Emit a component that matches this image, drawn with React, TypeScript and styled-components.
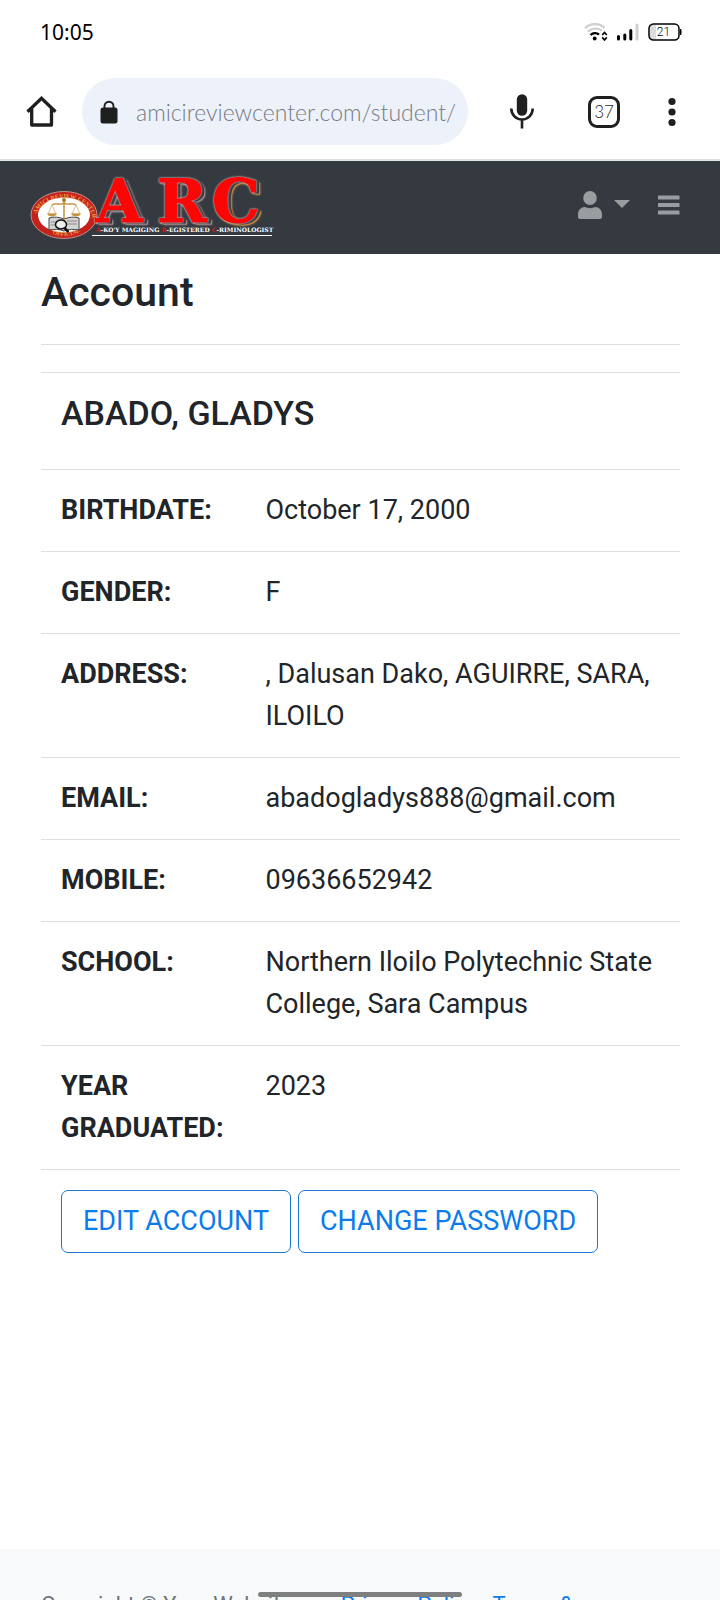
import React from "react";
import styled, { createGlobalStyle } from "styled-components";

const GlobalStyle = createGlobalStyle`
  *, *::before, *::after { box-sizing: border-box; }
  body {
    margin: 0;
    background: #fff;
    color: #212529;
    font-family: Roboto, "Liberation Sans", sans-serif;
    font-size: 27px;
    line-height: 42px;
  }
`;

const Screen = styled.div`
  display: flex;
  flex-direction: column;
  height: 100vh;
  overflow: hidden;
`;

const StatusBar = styled.div`
  display: flex;
  flex: none;
  align-items: center;
  justify-content: space-between;
  height: 64px;
  padding: 0 38px 0 40px;
  color: #000;
`;

const Clock = styled.time`
  font-family: "Noto Sans", sans-serif;
  font-size: 21px;
  line-height: 24px;
`;

const StatusIcons = styled.div`
  display: flex;
  align-items: center;
  gap: 8px;
`;

const BrowserBar = styled.div`
  display: flex;
  flex: none;
  align-items: center;
  height: 96px;
  padding: 0 44px 0 25px;
  border-bottom: 1px solid #dedede;
`;

const IconButton = styled.button`
  display: flex;
  flex: none;
  align-items: center;
  justify-content: center;
  padding: 0;
  border: 0;
  background: none;
  color: #1f1f1f;
  cursor: pointer;
`;

const MicButton = styled(IconButton)`
  width: 36px;
`;

const AddressBar = styled.label`
  display: flex;
  flex: 1;
  align-items: center;
  gap: 18px;
  min-width: 0;
  height: 67px;
  margin: 0 36px 0 24px;
  padding: 0 12px 0 18px;
  border-radius: 34px;
  background: #ecf1fa;
`;

const AddressInput = styled.input`
  flex: 1;
  min-width: 0;
  padding: 0;
  border: 0;
  outline: 0;
  background: none;
  color: #777b82;
  font-family: Lato, sans-serif;
  font-size: 23px;
  font-weight: 300;
`;

const BrowserActions = styled.div`
  display: flex;
  align-items: center;
  gap: 48px;
`;

const TabsButton = styled(IconButton)`
  width: 32px;
  height: 32px;
  border: 3px solid #1f1f1f;
  border-radius: 9px;
  font-family: Lato, sans-serif;
  font-size: 17px;
  font-weight: 300;
  line-height: 20px;
`;

const Scroller = styled.div`
  flex: 1;
  min-height: 0;
  overflow-y: auto;
  scrollbar-width: none;
`;

const Navbar = styled.nav`
  display: flex;
  align-items: center;
  justify-content: space-between;
  height: 94px;
  padding: 0 40px 0 30px;
  border-top: 1px solid #dfeae4;
  background: #343a40;
`;

const BrandLink = styled.a`
  display: flex;
`;

const NavActions = styled.div`
  display: flex;
  align-items: center;
  gap: 28px;
  padding-bottom: 5px;
`;

const NavButton = styled(IconButton)`
  gap: 12px;
  color: #9a9da0;
`;

const Main = styled.main`
  padding: 14px 40px 276px 41px;
`;

const PageTitle = styled.h1`
  margin: 0;
  font-size: 41px;
  font-weight: 500;
  line-height: 49px;
`;

const Rule = styled.hr`
  margin: 27px 0;
  border: 0;
  border-top: 1px solid #dfdfdf;
`;

const DetailsTable = styled.table`
  width: 100%;
  table-layout: fixed;
  border-spacing: 0;
`;

const NameCell = styled.th`
  padding: 20px 20px 35px;
  border-top: 1px solid #dee0e2;
  font-size: 34px;
  font-weight: 500;
  line-height: 41px;
  text-align: left;
`;

const LabelCell = styled.th`
  padding: 19px 20px 20px;
  border-top: 1px solid #dee0e2;
  font-weight: 700;
  text-align: left;
  vertical-align: top;
`;

const ValueCell = styled.td`
  padding: 19px 20px 20px;
  border-top: 1px solid #dee0e2;
  vertical-align: top;
`;

const ActionsRow = styled.div`
  display: flex;
  gap: 7px;
  padding: 20px;
  border-top: 1px solid #dee0e2;
`;

const OutlineButton = styled.button`
  padding: 9px 21px 10px;
  border: 1px solid #1a76cf;
  border-radius: 7px;
  background: #fff;
  color: #0c7cec;
  font: inherit;
  white-space: nowrap;
  cursor: pointer;
`;

const Footer = styled.footer`
  display: flex;
  padding: 39px 41px;
  background: #f8f9fb;
  color: #6c757d;
  font-size: 22px;
  line-height: 33px;
`;

const Copyright = styled.div`
  flex: 0 0 47%;
  padding-right: 40px;
`;

const FooterLink = styled.a`
  color: #0c7cec;
  text-decoration: none;
`;

const HomeIndicator = styled.div`
  position: fixed;
  bottom: 3px;
  left: 50%;
  width: 204px;
  height: 5px;
  border-radius: 3px;
  background: #7f7f7f;
  transform: translateX(-50%);
`;

const LogoSvg = styled.svg`
  overflow: visible;
`;

const LogoLetter = styled.text<{ $edge: string }>`
  fill: #fb0505;
  stroke: #fb0505;
  stroke-width: 1px;
  filter: drop-shadow(0 0 1px #f3d5d5) drop-shadow(3px 1px 0 #343a40) drop-shadow(1px 1px 0 ${({ $edge }) => $edge});
`;

const WifiIcon = () => (
  <svg width="24" height="18" viewBox="0 0 24 18" fill="none" aria-label="Wi-Fi">
    <path d="M1 5.2C6.5-.2 15-.2 20.500 4.700" stroke="#cfcfcf" strokeWidth="2.200" />
    <path d="M3.800 8.600C8 4.600 14.500 4.600 18 7.800" stroke="#cfcfcf" strokeWidth="2.200" />
    <path d="M6.500 12C9 9.600 12.800 9.600 15 11.600" stroke="#000" strokeWidth="2.400" />
    <circle cx="10.700" cy="15.500" r="1.900" fill="#000" />
    <path d="M18.200 12l2.300-2.600 2.300 2.600M18.200 14.400l2.300 2.600 2.300-2.600" stroke="#000" strokeWidth="1.600" />
  </svg>
);

const SignalIcon = () => (
  <svg width="24" height="18" viewBox="0 0 24 18" strokeWidth="3" strokeLinecap="round" aria-label="Signal">
    <path d="M2.500 13.500v2.500M8.800 12v4M14.800 7.500v8.500" stroke="#000" />
    <path d="M21 2v14" stroke="#cfcfcf" />
  </svg>
);

const BatteryIcon = () => (
  <svg width="34" height="18" viewBox="0 0 34 18" aria-label="Battery 21%">
    <path d="M5 2h3v14H5a3 3 0 0 1-3-3V5a3 3 0 0 1 3-3z" fill="#dcdcdc" />
    <rect x="1" y="1" width="30" height="16" rx="4.500" fill="none" stroke="#000" strokeWidth="1.500" />
    <path d="M32 6h.5a1 1 0 0 1 1 1v4a1 1 0 0 1-1 1H32z" fill="#000" />
    <text x="15.500" y="13" textAnchor="middle" fontFamily="Roboto, sans-serif" fontWeight="300" fontSize="12">21</text>
  </svg>
);

const HomeIcon = () => (
  <svg width="33" height="33" viewBox="0 0 33 33" fill="none" stroke="#1f1f1f" strokeWidth="3.300" strokeLinejoin="round">
    <path d="M2.500 16.800L16.500 3.200l14 13.600" strokeLinejoin="miter" />
    <path d="M6.700 14v16h19.800V14" />
  </svg>
);

const LockIcon = () => (
  <svg width="18" height="24" viewBox="0 0 18 24">
    <path d="M4.500 9V6.200a4.500 4.500 0 0 1 9 0V9" fill="none" stroke="#1f1f1f" strokeWidth="1.900" />
    <rect x="0.500" y="7.500" width="17" height="16" rx="2.500" fill="#1f1f1f" />
  </svg>
);

const MicIcon = () => (
  <svg width="24" height="35" viewBox="0 0 24 35">
    <rect x="6.800" y="0.300" width="10.400" height="21.400" rx="5.200" fill="#1f1f1f" />
    <path d="M1.300 14.500C1.300 21 6 25.500 12 25.500S22.700 21 22.700 14.500M12 25.500v9" fill="none" stroke="#1f1f1f" strokeWidth="2.600" />
  </svg>
);

const DotsIcon = () => (
  <svg width="8" height="30" viewBox="0 0 8 30" fill="#1f1f1f">
    <circle cx="4" cy="4.500" r="3.600" />
    <circle cx="4" cy="15" r="3.600" />
    <circle cx="4" cy="25.500" r="3.600" />
  </svg>
);

const UserIcon = () => (
  <svg width="24" height="28" viewBox="0 0 24 28" fill="currentColor">
    <ellipse cx="12" cy="7" rx="6.800" ry="7" />
    <path d="M6.500 16c3.500 1.500 7.500 1.500 11 0 4 .2 6.500 3.500 6.500 7.500V26a2 2 0 0 1-2 2H2a2 2 0 0 1-2-2v-2.500C0 19.500 2.500 16.200 6.500 16z" />
  </svg>
);

const CaretIcon = () => (
  <svg width="16" height="12" viewBox="0 0 16 12" fill="currentColor">
    <path d="M0 1h16L8 9z" />
  </svg>
);

const BarsIcon = () => (
  <svg width="22" height="20" viewBox="0 0 22 20" fill="currentColor">
    <rect width="21.500" height="4" y="0.500" rx="0.600" />
    <rect width="21.500" height="4" y="8" rx="0.600" />
    <rect width="21.500" height="4" y="15.500" rx="0.600" />
  </svg>
);

const logoLetters = [
  { char: "A", x: 66, edge: "#c39c9f" },
  { char: "R", x: 127, edge: "#c39c9f" },
  { char: "C", x: 182, edge: "#f0a040" },
];

const Logo = () => (
  <LogoSvg width="244" height="66" viewBox="0 0 244 66" role="img" aria-label="ARC">
    <defs>
      <path id="sealTop" d="M6 43a28 20 0 0 1 56 0" />
      <path id="sealBottom" d="M10 46a25 21 0 0 0 48 0" />
    </defs>
    <ellipse cx="34" cy="40" rx="33" ry="23.500" fill="#c4201c" stroke="#d8a9a0" strokeWidth="0.800" />
    <ellipse cx="34" cy="40" rx="26" ry="17.500" fill="#fff" />
    <g fontFamily="Liberation Serif, serif" fontWeight="700" fill="#e9a23b">
      <text fontSize="6"><textPath href="#sealTop" startOffset="4">AMICI REVIEW CENTER</textPath></text>
      <text fontSize="6"><textPath href="#sealBottom" startOffset="18">OFFICIAL</textPath></text>
    </g>
    <path d="M19 43c5-1.500 10-1 15 1 5-2 10-2.500 15-1v12c-5-1-10-1-15 1-5-2-10-2-15-1z" fill="#d4d4d4" stroke="#444" />
    <path d="M21 47h10M21 50h10M37 46h10M37 49h10" stroke="#777" strokeWidth="0.800" />
    <path d="M34 25v21M22 30c4-3 8 1 12-2 4 3 8-1 12 2" fill="none" stroke="#bd8a35" strokeWidth="1.400" />
    <path d="M22 30l-4 9h8zM46 30l-4 9h8z" fill="none" stroke="#caa25c" strokeWidth="0.700" />
    <path d="M17 38.500h10c-1 4-9 4-10 0zM41 38.500h10c-1 4-9 4-10 0z" fill="#c5913c" />
    <circle cx="34" cy="25" r="2" fill="#a97725" />
    <ellipse cx="31" cy="49.500" rx="5.500" ry="4.500" fill="#eee" stroke="#111" strokeWidth="1.500" />
    <path d="M34.500 53l4 4" stroke="#111" strokeWidth="2.500" />
    <g fontFamily="DejaVu Serif, serif" fontWeight="700" fontSize="60">
      {logoLetters.map(({ char, x, edge }) => (
        <LogoLetter key={char} x={x} y="47" $edge={edge}>{char}</LogoLetter>
      ))}
    </g>
    <text x="66" y="57" fontFamily="DejaVu Serif, serif" fontWeight="700" fontSize="6" fill="#fff">
      <tspan fill="#e01515">A</tspan>-KO'Y MAGIGING <tspan fill="#e01515">R</tspan>-EGISTERED <tspan fill="#e01515">C</tspan>-RIMINOLOGIST
    </text>
    <path d="M62 60.500h180" stroke="#fff" />
  </LogoSvg>
);

const details = [
  { label: "BIRTHDATE:", value: "October 17, 2000" },
  { label: "GENDER:", value: "F" },
  { label: "ADDRESS:", value: ", Dalusan Dako, AGUIRRE, SARA, ILOILO" },
  { label: "EMAIL:", value: "abadogladys888@gmail.com" },
  { label: "MOBILE:", value: "09636652942" },
  { label: "SCHOOL:", value: "Northern Iloilo Polytechnic State College, Sara Campus" },
  { label: "YEAR GRADUATED:", value: "2023" },
];

export default function App() {
  return (
    <Screen>
      <GlobalStyle />
      <StatusBar>
        <Clock>10:05</Clock>
        <StatusIcons>
          <WifiIcon />
          <SignalIcon />
          <BatteryIcon />
        </StatusIcons>
      </StatusBar>
      <BrowserBar>
        <IconButton aria-label="Home"><HomeIcon /></IconButton>
        <AddressBar>
          <LockIcon />
          <AddressInput aria-label="Address" defaultValue="amicireviewcenter.com/student/" />
        </AddressBar>
        <BrowserActions>
          <MicButton aria-label="Voice search"><MicIcon /></MicButton>
          <TabsButton aria-label="Open tabs">37</TabsButton>
          <IconButton aria-label="More options"><DotsIcon /></IconButton>
        </BrowserActions>
      </BrowserBar>
      <Scroller>
        <Navbar>
          <BrandLink href="#"><Logo /></BrandLink>
          <NavActions>
            <NavButton aria-label="User menu"><UserIcon /><CaretIcon /></NavButton>
            <NavButton aria-label="Toggle navigation"><BarsIcon /></NavButton>
          </NavActions>
        </Navbar>
        <Main>
          <PageTitle>Account</PageTitle>
          <Rule />
          <DetailsTable>
            <colgroup>
              <col width="32%" />
              <col />
            </colgroup>
            <tbody>
              <tr><NameCell colSpan={2}>ABADO, GLADYS</NameCell></tr>
              {details.map(({ label, value }) => (
                <tr key={label}>
                  <LabelCell scope="row">{label}</LabelCell>
                  <ValueCell>{value}</ValueCell>
                </tr>
              ))}
            </tbody>
          </DetailsTable>
          <ActionsRow>
            <OutlineButton>EDIT ACCOUNT</OutlineButton>
            <OutlineButton>CHANGE PASSWORD</OutlineButton>
          </ActionsRow>
        </Main>
        <Footer>
          <Copyright>Copyright © Your Website 2020</Copyright>
          <div>
            <FooterLink href="#">Privacy Policy</FooterLink> · <FooterLink href="#">Terms &amp; Conditions</FooterLink>
          </div>
        </Footer>
      </Scroller>
      <HomeIndicator />
    </Screen>
  );
}
